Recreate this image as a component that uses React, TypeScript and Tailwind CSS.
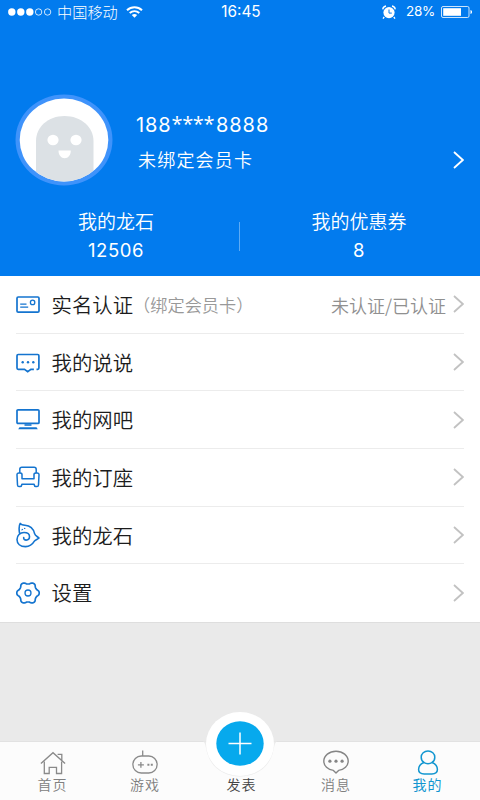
import type { ReactNode } from 'react';
import clsx from 'clsx';

type IconProps = {
  className?: string;
};

type MenuItem = {
  label: string;
  icon: ReactNode;
  hint?: string;
  status?: string;
};

// Six-lobed cog outline, sampled every 5 degrees
const GEAR_POINTS = Array.from({ length: 72 }, (_, i) => {
  const a = (i * Math.PI) / 36;
  const r = 10 + 1.1 * (Math.cos(6 * a) - 0.1 * Math.cos(18 * a));
  return `${(12 + r * 1.02 * Math.cos(a)).toFixed(2)},${(12 + r * Math.sin(a)).toFixed(2)}`;
}).join(' ');

const CardIcon = () => (
  <svg width="24" height="24" viewBox="0 0 24 24" fill="none" stroke="#1474cf" strokeWidth="1.7">
    <rect x="1" y="5" width="22" height="15.2" rx="1.2" />
    <circle cx="16.6" cy="10.4" r="2.2" strokeWidth="1.3" />
    <path d="M4.2 12.2h6.3M4.2 15.2h8" strokeWidth="1.2" />
  </svg>
);

const TalkIcon = () => (
  <svg width="24" height="24" viewBox="0 0 24 24" fill="none" stroke="#1474cf" strokeWidth="1.7">
    <path d="M20.500 19.300h1.200a1.200 1.200 0 0 0 1.200-1.200V5.700a1.200 1.200 0 0 0-1.200-1.200H2.200A1.200 1.200 0 0 0 1 5.700v12.400a1.200 1.200 0 0 0 1.200 1.200h6.300l3.200 2.400 3.200-2.400h3" />
    <g fill="#1474cf" stroke="none">
      <circle cx="6.700" cy="12.200" r="1.200" />
      <circle cx="12" cy="12.200" r="1.200" />
      <circle cx="17.300" cy="12.200" r="1.200" />
    </g>
  </svg>
);

const ComputerIcon = () => (
  <svg width="24" height="24" viewBox="0 0 24 24" fill="none" stroke="#1474cf" strokeWidth="1.7">
    <rect x="1" y="1.800" width="22" height="13.600" rx="1" />
    <path d="M8.500 16.200h7v1.600h-7z" fill="#1474cf" stroke="none" />
    <path d="M3.500 19.200h17l1.300 2H2.200z" fill="#1474cf" stroke="none" />
  </svg>
);

const SofaIcon = () => (
  <svg width="24" height="24" viewBox="0 0 24 24" fill="none" stroke="#1474cf" strokeWidth="1.5" strokeLinejoin="round">
    <path d="M3.800 8V4.400c0-1.300.8-2.100 2.100-2.100h12.200c1.300 0 2.100.8 2.100 2.100V8" />
    <path d="M6 13.800V9.600C6 8.500 5.100 8 3.900 8H3C1.600 8 .9 8.800 1 10l.5 10c.1 1.100.6 1.600 1.500 1.600h1.200c.9 0 1.300-.5 1.500-1.600l.2-.8h12.200l.2.8c.2 1.100.6 1.600 1.500 1.600H21c.9 0 1.400-.5 1.500-1.600l.5-10c.1-1.200-.6-2-2-2h-.9c-1.200 0-2.100.5-2.100 1.600v4.200z" />
  </svg>
);

const ShellIcon = () => (
  <svg width="24" height="26" viewBox="0 0 24 26" fill="none" stroke="#1474cf" strokeWidth="1.600" strokeLinecap="round" strokeLinejoin="round">
    <path d="M3.500 10.800C2.900 7 2.900 3.500 4.200 1.400 5 2.900 6.500 3.100 9 3.300c5.500.5 8.600 4.200 9.600 8.300.5 2 2.400 2.700 4.400 4.400-1.500 1.600-3.500 1.400-4.600 3.200-1.600 2.700-4.200 5.400-8.900 5.400C4.300 24.600 1 21.600 1 17.400c0-3.900 3-6.900 7-6.900 3.300 0 5.500 1.600 5.500 4.100 0 2.200-1.500 3.500-3.300 3.500-1.700 0-2.700-1.100-2.500-2.600" />
    <path d="M5.900 7.900l.7-.600M8.500 6.500l.4-.100" strokeWidth="1.100" />
  </svg>
);

const GearIcon = () => (
  <svg width="24" height="24" viewBox="0 0 24 24" fill="none" stroke="#1474cf" strokeWidth="1.700" strokeLinejoin="round">
    <polygon points={GEAR_POINTS} />
    <circle cx="12" cy="12" r="3" strokeWidth="1.300" />
  </svg>
);

const HomeIcon = () => (
  <svg width="26" height="26" viewBox="0 0 26 26" fill="none" stroke="#8a8a8a" strokeWidth="1.300">
    <path d="M.9 13.600L13 2.700l12.100 10.900M17.600 4.300h4.200v6.100" />
    <path d="M4.300 11.500v12h4.900v-6.200h7.300v6.200h5.100v-12" />
  </svg>
);

const GameIcon = () => (
  <svg width="26" height="26" viewBox="0 0 26 26" fill="none" stroke="#8a8a8a" strokeWidth="1.300">
    <path d="M10.700 0.500V6" />
    <rect x=".9" y="6" width="24.200" height="17" rx="8.300" />
    <path d="M5.900 14.800h6M8.900 11.900v5.800" />
    <path d="M15.400 14.800h2M18.800 14.800h2" strokeWidth="1.900" />
  </svg>
);

const MessageIcon = () => (
  <svg width="26" height="26" viewBox="0 0 26 26" fill="none" stroke="#858585" strokeWidth="1.400" strokeLinejoin="round">
    <path d="M10.400 20.400C4.800 19.700.8 15.900.8 11.100.8 5.600 6.200 1.200 13 1.200s12.200 4.400 12.200 9.900c0 4.800-4 8.600-9.600 9.300L13 22.900z" />
    <g fill="#858585" stroke="none">
      <circle cx="6.900" cy="11.200" r="1.600" />
      <circle cx="13" cy="11.200" r="1.600" />
      <circle cx="19.100" cy="11.200" r="1.600" />
    </g>
  </svg>
);

const PersonIcon = () => (
  <svg width="26" height="26" viewBox="0 0 26 26" fill="none" stroke="#1296d0" strokeWidth="1.500">
    <path d="M9 12.500C6.900 11.300 6.200 9.300 6.200 7.200 6.200 3.600 9.200.9 13 .9s6.800 2.700 6.800 6.300c0 2.100-.7 4.100-2.800 5.300" />
    <path d="M9 12.500c1.200.9 2.500 1.200 4 1.200s2.800-.3 4-1.200c3.300 1.300 5.400 4.100 5.400 7 0 3.300-2.200 4.400-5.600 4.400H9.200c-3.400 0-5.600-1.100-5.600-4.400 0-2.900 2.100-5.700 5.400-7z" />
  </svg>
);

const Chevron = ({ className }: IconProps) => (
  <svg className={className} width="11" height="18" viewBox="0 0 11 18" fill="none" stroke="currentColor" strokeWidth="1.800">
    <path d="M1 1l8.800 8L1 17" />
  </svg>
);

const MENU: MenuItem[] = [
  { label: '实名认证', icon: <CardIcon />, hint: '（绑定会员卡）', status: '未认证/已认证' },
  { label: '我的说说', icon: <TalkIcon /> },
  { label: '我的网吧', icon: <ComputerIcon /> },
  { label: '我的订座', icon: <SofaIcon /> },
  { label: '我的龙石', icon: <ShellIcon /> },
  { label: '设置', icon: <GearIcon /> },
];

function StatusBar() {
  return (
    <div className="flex h-6 items-center justify-between pr-[7px] pl-2 leading-none">
      <div className="flex w-[180px] items-center">
        <svg width="44" height="8" viewBox="0 0 44 8" fill="#fff">
          <circle cx="3.800" cy="4" r="3.700" />
          <circle cx="12.800" cy="4" r="3.700" />
          <circle cx="21.800" cy="4" r="3.700" />
          <g fill="none" stroke="#fff" strokeWidth=".8">
            <circle cx="30.600" cy="4" r="3.200" />
            <circle cx="39.600" cy="4" r="3.200" />
          </g>
        </svg>
        <span className="ml-[5px] text-[15.200px] font-light">中国移动</span>
        <svg className="ml-[8px]" width="17" height="12" viewBox="0 0 17 12" fill="none" stroke="#fff" strokeWidth="2">
          <path d="M1 4.300c4.300-4 10.700-4 15 0M3.700 7.100c2.800-2.500 6.800-2.500 9.600 0" />
          <path d="M8.500 11.800L5.800 9.100c1.600-1.400 3.800-1.400 5.400 0z" fill="#fff" stroke="none" />
        </svg>
      </div>
      <span className="pb-px pl-px font-[Inter,sans-serif] text-[15.300px]">16:45</span>
      <div className="flex w-[180px] items-center justify-end font-[Inter,sans-serif]">
        <svg width="14" height="14" viewBox="0 0 14 14" fill="#fff">
          <circle cx="7" cy="7.600" r="5.600" />
          <path d="M2.200 12l-1.200 1.600M11.800 12l1.200 1.600M.7 4.300A4 4 0 0 1 4 1M13.300 4.300A4 4 0 0 0 10 1" stroke="#fff" strokeWidth="1.300" fill="none" />
          <path d="M7 4.500v3.600h2.800" stroke="#027bee" strokeWidth="1" fill="none" />
        </svg>
        <span className="ml-[10px] text-[13.500px] tracking-[-0.300px]">28%</span>
        <svg className="ml-[6px]" width="32" height="12" viewBox="0 0 32 12" fill="#fff">
          <rect x=".5" y=".5" width="27.500" height="11" rx="1.500" fill="none" stroke="#fff" strokeWidth=".8" />
          <rect x="2.200" y="2.200" width="17.800" height="7.600" />
          <path d="M29.500 4c2 .5 2 3.500 0 4z" />
        </svg>
      </div>
    </div>
  );
}

function Avatar() {
  return (
    <svg width="98" height="92" viewBox="0 0 98 92">
      <ellipse cx="49" cy="46" rx="48.500" ry="45.500" fill="#3f93fb" />
      <clipPath id="face">
        <ellipse cx="49" cy="46" rx="44.300" ry="41.500" />
      </clipPath>
      <g clipPath="url(#face)" fill="#fff">
        <path d="M0 0h98v92H0z" />
        <path d="M21 92V47c0-14 12-25 28.500-25S78.500 33 78.500 47v45z" fill="#dce1e5" />
        <ellipse cx="38" cy="46" rx="5.600" ry="5.300" />
        <ellipse cx="61" cy="46" rx="5.600" ry="5.300" />
        <path d="M43.500 56.500h12.300c0 4.700-2.600 7.700-6.100 7.700s-6.200-3-6.200-7.700z" />
      </g>
    </svg>
  );
}

function Stat({ label, value }: { label: string; value: string }) {
  return (
    <div className="flex flex-col items-center">
      <span className="text-[19px] leading-7 font-[350]">{label}</span>
      <span className="font-[Inter,sans-serif] text-[18.500px] leading-[30px] tracking-[0.600px]">{value}</span>
    </div>
  );
}

function Header() {
  return (
    <header className="h-[276px] bg-[#027bee] text-white">
      <StatusBar />
      <div className="flex h-[136px] items-end pt-[70px] pr-4 pl-[15px]">
        <div className="flex flex-1 items-center self-start">
          <Avatar />
          <div className="ml-[23px] flex flex-col">
            <span className="flex h-[37px] pt-[3px] font-[Inter,sans-serif] text-[20px] leading-[34px] tracking-[0.900px]">
              188
              <span className="-mt-px font-['Open_Sans',sans-serif] tracking-[-0.400px]">****</span>
              <span className="ml-0.5">8888</span>
            </span>
            <span className="ml-[2px] text-[18px] leading-[34px] font-[350] tracking-[1.200px]">未绑定会员卡</span>
          </div>
          <Chevron className="mt-10 ml-auto" />
        </div>
      </div>
      <div className="mt-[47px] flex items-center">
        <div className="w-[239px] pr-[7px]"><Stat label="我的龙石" value="12506" /></div>
        <div className="h-[29px] w-px bg-[#5dabf5]" />
        <div className="w-[240px] pr-[2px]"><Stat label="我的优惠券" value="8" /></div>
      </div>
    </header>
  );
}

function MenuRow({ item, last }: { item: MenuItem; last: boolean }) {
  return (
    <li className={clsx('flex h-[57.700px] items-center border-b', last ? 'border-transparent' : 'border-[#ececec]')}>
      {item.icon}
      <span className="ml-3 text-[20.400px] font-[350] text-[#1c1c1c]">{item.label}</span>
      {item.hint && <span className="pt-0.5 text-[17.200px] font-[350] text-[#999]">{item.hint}</span>}
      {item.status && <span className="ml-auto pt-0.5 text-[18px] font-[350] text-[#909090]">{item.status}</span>}
      <Chevron className={clsx('text-[#c2c2c2]', item.status ? 'ml-[7px]' : 'ml-auto')} />
    </li>
  );
}

function Tab({ label, icon, active }: { label: string; icon: ReactNode; active?: boolean }) {
  return (
    <div className={clsx('flex flex-col items-center', active ? 'text-[#1296d0]' : 'font-[350] text-[#808080]')}>
      {icon}
      <span className="-mt-px text-[14px] leading-[18px] tracking-[1px]">{label}</span>
    </div>
  );
}

function TabBar() {
  return (
    <nav className="relative flex h-[59px] border-t border-[#e2e2e2] bg-[#fcfcfc] pt-[8px]">
      <div className="absolute -top-[31px] left-[203px]">
        <svg width="74" height="70" viewBox="0 0 74 70">
          <path d="M0 30.500c3 1.500 2.500 7 5 14 5 14 18 21 32 21s27-7 32-21c2.500-7 2-12.500 5-14z" fill="#ececec" />
          <ellipse cx="37" cy="33" rx="34" ry="32" fill="#fff" />
          <ellipse cx="37" cy="32.500" rx="23.700" ry="22.300" fill="#07a9ed" />
          <path d="M25.500 32.500h23M37 21.500v22" stroke="#fff" strokeWidth="1.500" />
        </svg>
      </div>
      <div className="ml-[7px] w-[91px]"><Tab label="首页" icon={<HomeIcon />} /></div>
      <div className="w-[94px]"><Tab label="游戏" icon={<GameIcon />} /></div>
      <div className="relative mt-[25px] w-[98px] pl-px text-center text-[14px] leading-[18px] font-[350] tracking-[1px] text-[#444]">发表</div>
      <div className="w-[92px]"><Tab label="消息" icon={<MessageIcon />} /></div>
      <div className="w-[91px]"><Tab label="我的" icon={<PersonIcon />} active /></div>
    </nav>
  );
}

export default function App() {
  return (
    <div className="flex h-[800px] w-[480px] flex-col overflow-hidden bg-[#eaeaea] font-['Noto_Sans_CJK_SC',sans-serif] whitespace-nowrap">
      <Header />
      <ul className="h-[346px] bg-white pr-4 pl-[15.500px] shadow-[0_1px_0_#dedede]">
        {MENU.map((item, i) => (
          <MenuRow key={item.label} item={item} last={i === MENU.length - 1} />
        ))}
      </ul>
      <div className="flex-1" />
      <TabBar />
    </div>
  );
}
